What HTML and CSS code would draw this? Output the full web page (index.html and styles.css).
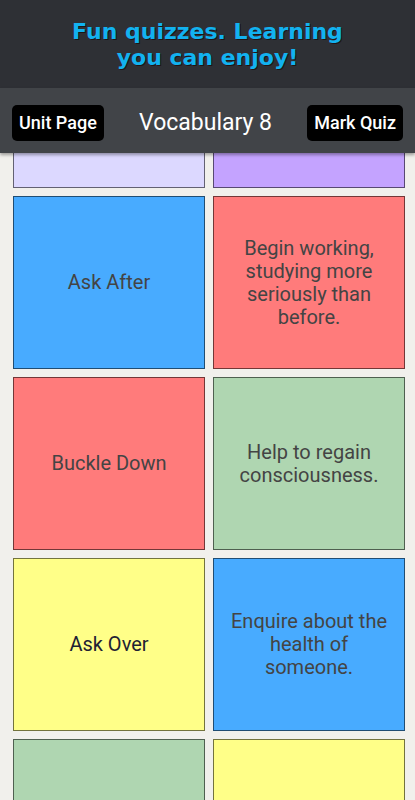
FILE: index.html
```html
<!DOCTYPE html>
<html lang="en">
<head>
    <meta charset="UTF-8">
    <meta name="viewport" content="width=device-width, initial-scale=1.0">
    <title>Vocabulary 8</title>
    <link rel="stylesheet" href="styles.css">
</head>
<body>
    <div class="banner">
        <h1>Fun quizzes. Learning<br>you can enjoy!</h1>
    </div>

    <div class="navbar">
        <button type="button" class="nav-btn">Unit Page</button>
        <div class="title">Vocabulary 8</div>
        <button type="button" class="nav-btn">Mark Quiz</button>
    </div>

    <div class="content">
        <div class="cards">
            <div class="card lavender"></div>
            <div class="card purple"></div>

            <div class="card blue">Ask After</div>
            <div class="card red">Begin working, studying more seriously than before.</div>

            <div class="card red">Buckle Down</div>
            <div class="card green">Help to regain consciousness.</div>

            <div class="card yellow dark-text">Ask Over</div>
            <div class="card blue">Enquire about the health of someone.</div>

            <div class="card green"></div>
            <div class="card yellow"></div>
        </div>
    </div>
</body>
</html>
```

FILE: styles.css
```css
body {
    margin: 0;
    padding: 0;
    height: 800px;
    overflow: hidden;
    background-color: #f1f0ec;
    font-family: Roboto, "Liberation Sans", sans-serif;
    display: flex;
    flex-direction: column;
}

.banner {
    height: 88px;
    background-color: #2e3035;
    display: flex;
    align-items: center;
    justify-content: center;
}

.banner h1 {
    margin: 0;
    padding-top: 2px;
    font-family: "DejaVu Sans", Verdana, sans-serif;
    font-size: 22px;
    font-weight: bold;
    line-height: 26px;
    text-align: center;
    color: #12b2f0;
    text-shadow: 1px 1px 0 #201515;
}

.navbar {
    height: 65px;
    background-color: #414448;
    display: flex;
    align-items: center;
    justify-content: space-between;
    padding: 0 12px;
    box-shadow: 0 2px 3px rgba(0, 0, 0, 0.35);
    position: relative;
    z-index: 2;
}

.nav-btn {
    height: 36px;
    margin-top: 4px;
    padding: 0 7px;
    border: none;
    border-radius: 5px;
    background-color: #000;
    color: #fff;
    font-family: Roboto, "Liberation Sans", sans-serif;
    font-size: 18px;
    font-weight: 500;
}

.title {
    margin-top: 4px;
    color: #fff;
    font-size: 23px;
}

.content {
    flex: 1;
    overflow: hidden;
}

.cards {
    display: grid;
    grid-template-columns: 192px 192px;
    grid-auto-rows: 173px;
    gap: 8px;
    padding: 0 10px 0 13px;
    margin-top: -138px;
}

.card {
    box-sizing: border-box;
    border: 1px solid rgba(0, 0, 0, 0.55);
    display: flex;
    align-items: center;
    justify-content: center;
    text-align: center;
    padding: 0 15px;
    font-size: 20px;
    font-weight: 400;
    line-height: 23px;
    color: #444;
}

.dark-text {
    color: #1e2233;
}

.lavender { background-color: #dcd8ff; }
.purple { background-color: #c4a3ff; }
.blue { background-color: #48abff; }
.red { background-color: #ff7b7b; }
.green { background-color: #afd6b1; }
.yellow { background-color: #ffff88; }
```
